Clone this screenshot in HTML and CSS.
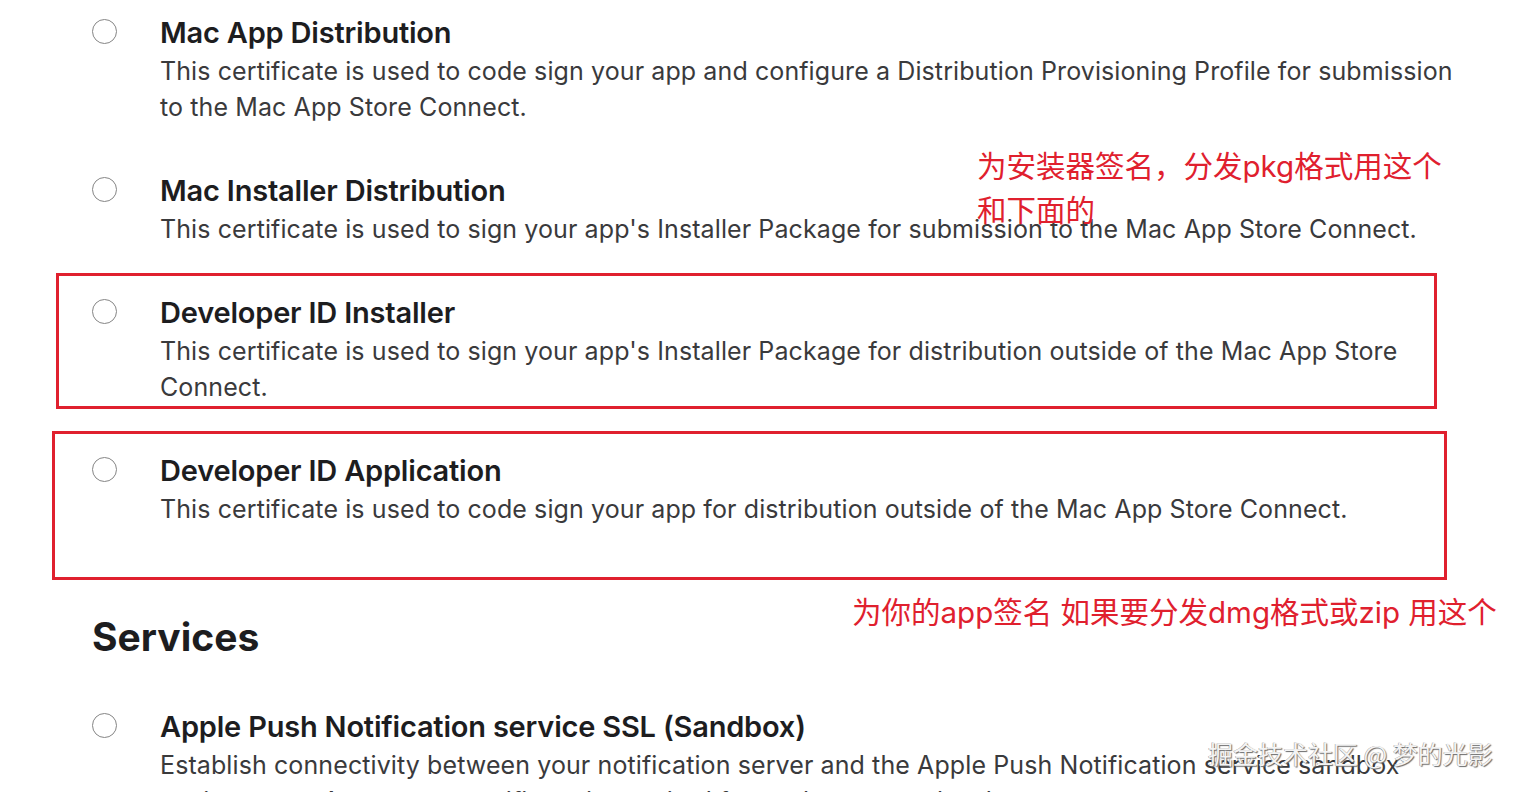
FILE: index.html
```html
<!DOCTYPE html>
<html lang="en">
<head>
<meta charset="utf-8">
<title>Certificates</title>
<link rel="stylesheet" href="styles.css">
</head>
<body>
<main class="page">
  <div class="item">
    <span class="radio"></span>
    <div class="text">
      <div class="title">Mac App Distribution</div>
      <p class="desc">This certificate is used to code sign your app and configure a Distribution Provisioning Profile for submission to the Mac App Store Connect.</p>
    </div>
  </div>
  <div class="item">
    <span class="radio"></span>
    <div class="text">
      <div class="title">Mac Installer Distribution</div>
      <p class="desc">This certificate is used to sign your app's Installer Package for submission to the Mac App Store Connect.</p>
    </div>
  </div>
  <div class="item">
    <span class="radio"></span>
    <div class="text">
      <div class="title">Developer ID Installer</div>
      <p class="desc">This certificate is used to sign your app's Installer Package for distribution outside of the Mac App Store Connect.</p>
    </div>
  </div>
  <div class="item">
    <span class="radio"></span>
    <div class="text">
      <div class="title">Developer ID Application</div>
      <p class="desc">This certificate is used to code sign your app for distribution outside of the Mac App Store Connect.</p>
    </div>
  </div>
  <h2 class="section">Services</h2>
  <div class="item">
    <span class="radio"></span>
    <div class="text">
      <div class="title">Apple Push Notification service SSL (Sandbox)</div>
      <p class="desc">Establish connectivity between your notification server and the Apple Push Notification service sandbox environment. A separate certificate is required for each app you develop.</p>
    </div>
  </div>

  <div class="box box-1"></div>
  <div class="box box-2"></div>
  <div class="note note-1">为安装器签名，分发pkg格式用这个<br>和下面的</div>
  <div class="note note-2">为你的app签名 如果要分发dmg格式或zip 用这个</div>
  <div class="watermark">掘金技术社区 @ 梦的光影</div>
</main>
</body>
</html>
```

FILE: styles.css
```css
html, body {
  margin: 0;
  padding: 0;
  background: #fff;
}
body {
  width: 1516px;
  height: 792px;
  overflow: hidden;
  font-family: Inter, "Liberation Sans", "Noto Sans CJK SC", sans-serif;
}
.page {
  position: relative;
  padding: 14px 0 0 92px;
  width: 1374px;
}
.item {
  display: flex;
  gap: 43px;
  margin-bottom: 47px;
}
.radio {
  flex: none;
  width: 23px;
  height: 23px;
  margin-top: 5px;
  border: 1.5px solid #858585;
  border-radius: 50%;
  box-sizing: content-box;
}
.text {
  width: 1305px;
}
.title {
  font-size: 29px;
  line-height: 38px;
  font-weight: 600;
  color: #1d1d1f;
  letter-spacing: -0.2px;
}
.desc {
  margin: 0;
  padding-top: 1px;
  font-size: 25px;
  line-height: 36px;
  color: #3a3a3c;
  letter-spacing: 0.1px;
}
.section {
  margin: 86px 0 47px 0;
  font-size: 39px;
  line-height: 48px;
  font-weight: 700;
  color: #1d1d1f;
}
.box {
  position: absolute;
  border: 3px solid #e0202e;
  box-sizing: border-box;
}
.box-1 {
  left: 56px;
  top: 273px;
  width: 1381px;
  height: 136px;
}
.box-2 {
  left: 52px;
  top: 431px;
  width: 1395px;
  height: 149px;
}
.note {
  position: absolute;
  color: #e0202e;
  font-family: Inter, "Noto Sans CJK SC", sans-serif;
  font-size: 29.5px;
  white-space: nowrap;
}
.note-1 {
  left: 977px;
  top: 144px;
  line-height: 44px;
}
.note-2 {
  left: 852px;
  top: 592px;
  line-height: 40px;
}
.watermark {
  position: absolute;
  left: 1208px;
  top: 736px;
  font-family: "Noto Sans CJK SC", sans-serif;
  font-size: 25px;
  line-height: 34px;
  color: #f4f4f4;
  text-shadow: 1px 1px 1px #6a6a6a, -0.5px -0.5px 0 #9a9a9a;
  white-space: nowrap;
}
```
